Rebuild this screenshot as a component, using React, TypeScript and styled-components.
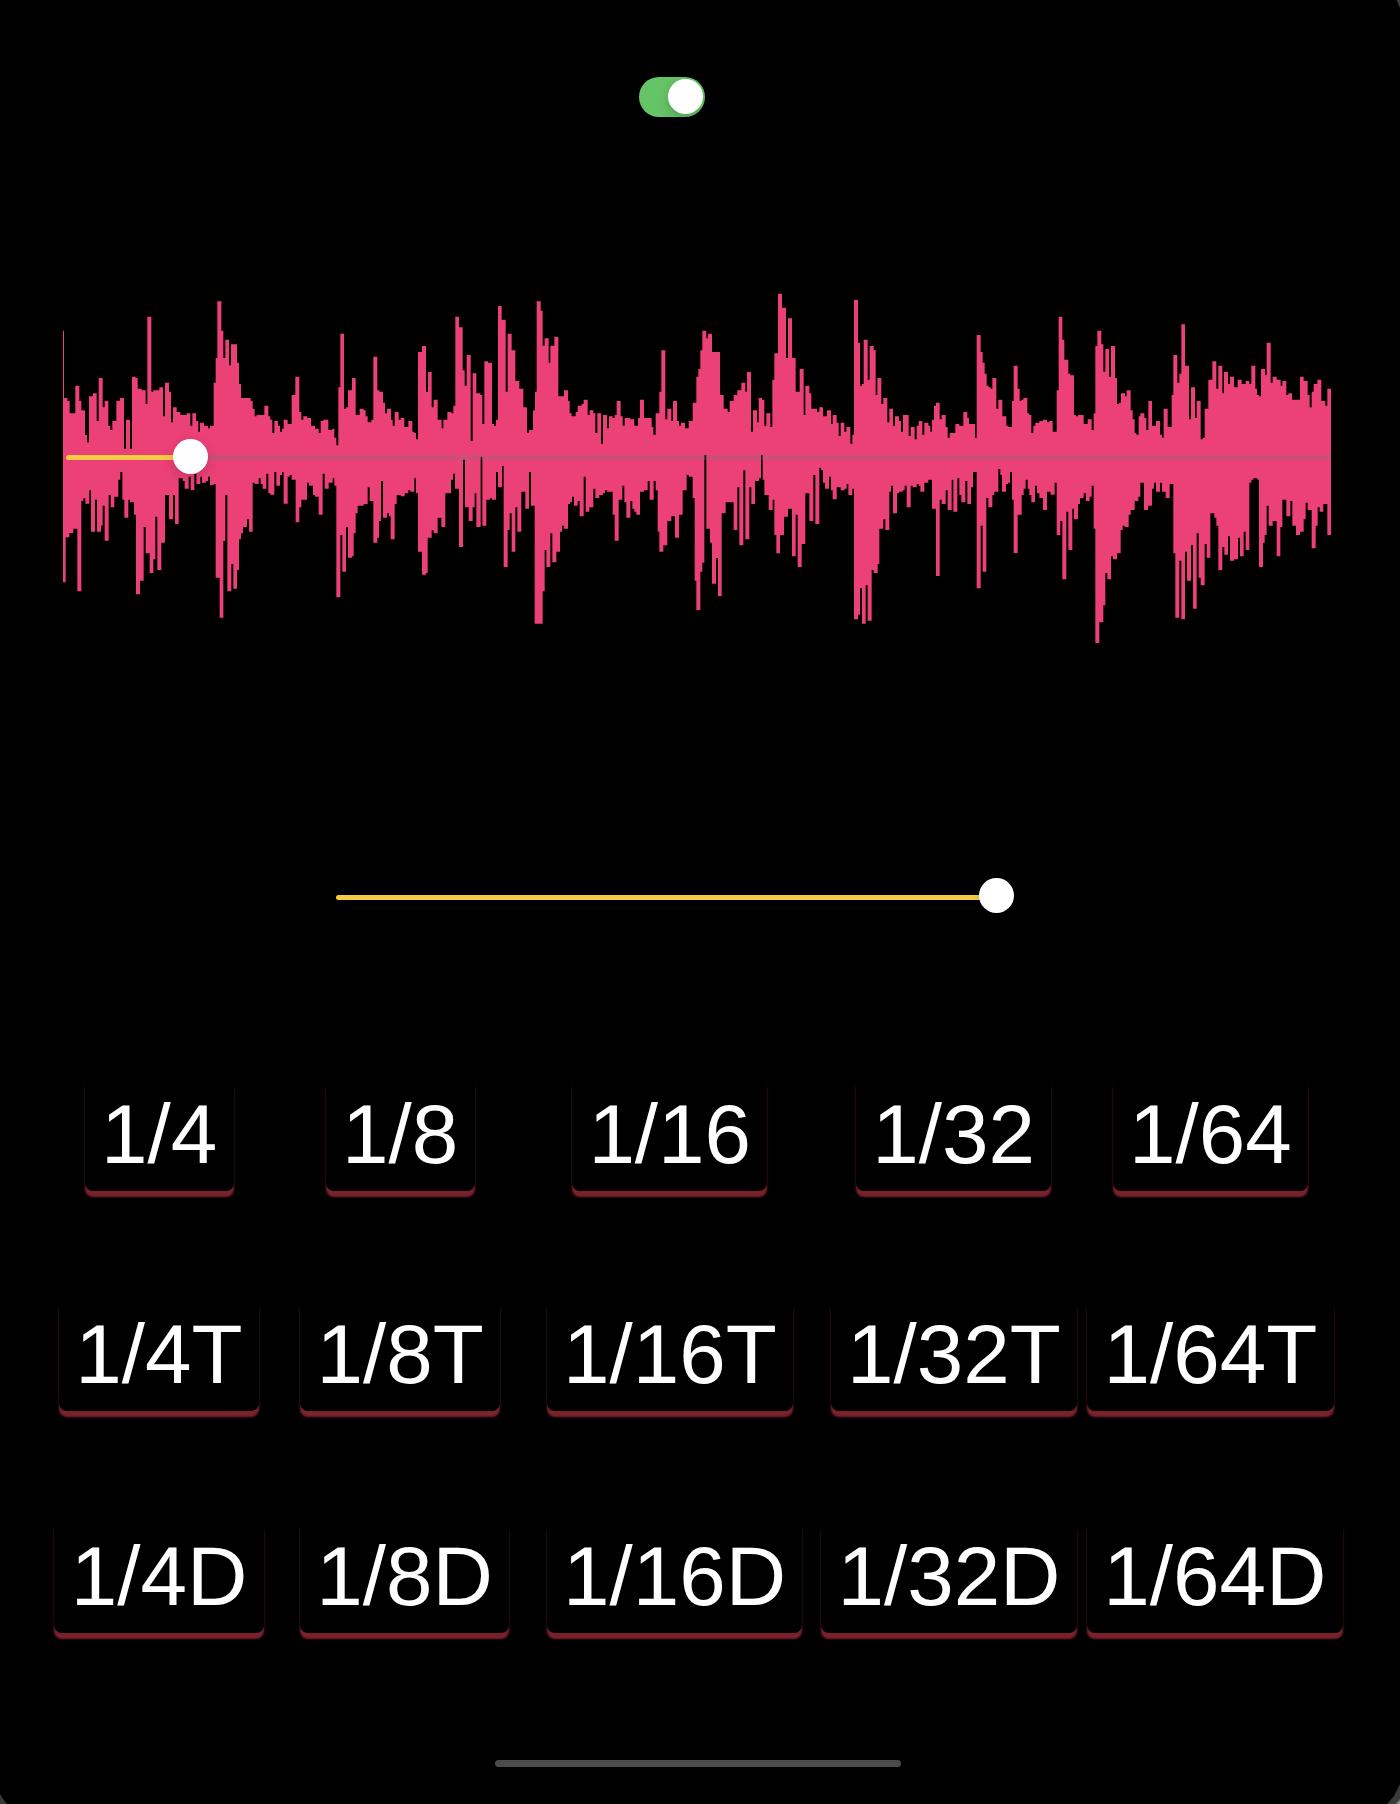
import React from "react";
import styled, { createGlobalStyle } from "styled-components";

const GlobalStyle = createGlobalStyle`
  html, body { margin: 0; background: #000; }
  * { box-sizing: border-box; }
`;

/* Each envelope is a list of "x:y" steps; x restarts at every chunk, 960 units apart. */
const UPPER = [
  "39:152 42:354 52:363 59:400 76:317 88:363 94:391 105:465 111:487 117:349 129:340 140:423 146:294 158:382 164:363 175:437 181:450 187:423 199:363 210:354 222:506 228:419 240:506 246:290 257:294 263:326 275:331 287:372 292:110 304:335 310:331 328:322 339:409 345:308 357:335 363:427 369:382 380:396 391:405 410:400 421:437 427:400 438:423 445:455 450:428 462:437 474:445 480:437 491:308 497:234 502:64 514:152 520:234 526:179 537:256 543:193 561:248 567:312 573:354 602:363 608:386 614:409 620:405 643:377 655:409 661:419 667:459 673:423 684:437 690:455 696:446 701:419 713:432 725:345 736:290 748:396 754:419 760:409 772:414 783:437 795:446 806:459 812:423 820:419 835:450 847:446 853:473 859:496 865:322 871:161 882:386 888:382 894:331 906:294 917:405 929:386 941:391 947:409 953:427",
  "4:419 10:230 22:331 28:335 39:368 45:400 51:386 63:419 68:437 74:396 86:419 92:414 103:441 115:423 127:455 133:459 138:478 144:216 156:198 168:335 174:276 185:382 191:359 203:419 215:445 220:419 232:396 244:400 250:377 256:110 267:142 278:271 284:317 290:225 302:483 308:280 319:340 331:345 337:432 343:244 354:248 366:432 372:437 378:419 384:78 395:119 407:335 413:161 425:211 436:303 448:326 460:382 471:459 477:450 489:391 495:335 500:64 512:92 518:197 524:175 536:248 541:197 553:170 565:349 582:331 594:363 599:400 605:409 617:396 623:377 635:372 641:359 653:405 659:391 670:400 676:459 682:400 693:491 699:405 711:445 717:409 728:414 734:405 740:363 752:409 758:437 764:414 781:418 793:437 804:414 810:359 822:414 845:441 850:464 857:400 868:335 874:211 886:418 892:386 904:423 909:363 921:423 927:437 933:428 945:445 956:423",
  "8:368 19:290 25:267 31:211 37:152 49:175 54:161 66:216 90:345 101:386 113:396 119:363 131:345 142:331 154:308 166:335 171:276 183:455 189:391 201:427 206:354 216:359 223:437 229:400 241:441 247:299 253:220 264:41 276:83 288:234 294:115 306:234 317:335 329:267 341:405 346:317 358:340 364:386 381:396 388:382 399:409 411:391 423:432 428:405 440:428 446:468 452:428 463:455 469:441 481:491 487:464 492:60 504:188 510:317 516:312 521:179 533:299 539:198 551:211 557:345 562:294 574:372 580:354 592:427 598:386 609:437 615:409 627:423 633:455 639:405 656:468 662:441 674:478 680:437 686:423 697:464 703:428 715:437 721:455 726:419 732:377 738:368 749:418 755:405 767:441 773:473 779:459 796:432 808:437 820:396 832:414 837:432 855:473 860:165 872:216 878:248 884:281 890:317 896:322 902:326 907:294 919:386 925:359 937:409 949:437 955:441",
  "6:363 11:257 23:326 29:363 34:359 40:354 52:400 58:405 64:459 70:437 76:428 88:423 99:419 111:427 117:423 128:455 140:331 146:110 157:179 163:239 175:281 181:286 192:405 198:409 204:405 221:432 233:418 245:450 251:400 256:198 262:152 274:193 280:275 286:207 297:290 303:198 315:294 321:372 327:368 333:340 345:349 350:331 362:391 368:418 374:459 379:464 386:409 391:400 403:414 409:450 415:363 426:437 438:423 450:464 456:473 461:386 473:441 485:345 490:225 502:308 508:281 514:133 525:257 537:418 543:322 555:414 560:363 572:478 578:473 584:386 595:299 607:244 619:326 625:257 637:340 642:276 654:312 660:290 672:322 683:299 695:312 707:303 718:312 724:257 736:326 741:345 747:349 753:267 765:285 770:188 782:308 788:290 800:299 812:317 817:303 829:345 835:340 846:359 870:290 881:303 893:345 899:382 905:335 911:312 922:299 934:363 946:377 952:326",
];

const LOWER = [
  "39:907 47:772 58:759 70:746 82:934 94:663 100:655 106:671 118:631 123:755 135:659 141:755 153:737 158:677 164:782 176:645 182:682 193:650 205:599 211:576 217:659 223:713 235:659 240:667 252:704 258:943 270:902 281:741 287:820 299:879 310:838 316:710 322:870 334:788 345:645 357:718 369:645 375:732 386:595 398:603 404:626 416:590 422:630 433:582 439:612 451:590 456:608 468:603 474:590 480:616 491:612 497:893 509:1013 520:783 526:645 532:934 544:852 550:926 561:870 567:778 573:760 579:741 591:718 597:755 608:608 614:612 626:595 632:612 638:626 649:581 655:640 661:644 673:576 679:617 690:585 696:576 701:671 713:590 719:585 725:599 737:727 748:682 754:659 771:608 777:617 789:645 795:650 806:704 818:581 824:626 836:608 848:595 853:617 859:952 871:765 877:875 888:741 894:833 906:829 911:760 917:700 923:677 941:672 953:622 959:663",
  "10:788 22:773 27:723 33:603 39:713 51:700 57:709 62:778 74:672 80:645 92:649 104:640 115:631 121:635 133:595 138:640 144:815 156:884 168:879 173:773 185:751 191:760 203:713 214:741 226:640 243:599 249:581 255:626 267:801 279:539 285:682 296:723 308:682 314:640 319:741 332:530 337:737 349:659 360:655 366:659 378:576 384:622 396:558 401:861 413:750 419:700 425:815 436:682 442:755 454:635 466:686 477:576 483:677 494:1031 518:934 524:810 529:861 541:760 547:847 559:815 570:755 576:737 582:746 594:672 600:667 606:650 612:677 623:663 629:709 641:590 647:695 658:682 670:626 676:654 688:645 699:640 705:631 711:635 728:704 734:782 746:659 757:617 763:667 769:713 781:663 787:686 793:695 799:704 810:635 822:631 833:603 839:659 851:603 857:631 863:755 868:815 880:796 892:723 904:709 915:773 927:704 938:631 950:585 956:590",
  "8:654 14:902 19:990 31:875 37:848 43:525 49:746 60:788 66:911 78:834 84:948 95:700 107:667 131:750 142:622 148:796 160:571 166:778 178:622 184:672 195:603 207:595 213:525 218:599 223:645 236:690 248:659 253:765 259:820 270:765 282:710 294:686 306:829 317:704 323:861 335:792 346:640 358:723 370:585 376:732 388:563 393:571 399:608 405:626 417:590 423:631 428:658 440:622 452:631 464:626 470:612 475:645 487:626 492:1018 504:1004 510:925 516:1031 527:916 533:1022 545:870 551:879 563:852 568:746 580:718 586:750 598:635 603:617 609:700 621:640 627:635 638:631 644:617 650:682 662:617 668:622 680:612 686:617 691:635 703:608 715:599 726:686 738:888 749:659 755:672 767:631 773:690 785:599 790:695 802:595 808:645 814:667 826:603 832:672 843:622 849:576 860:925 872:737 878:875 889:654 895:682 907:645 913:635 925:567 931:585 936:635 948:612 954:608",
  "0:576 6:659 11:819 23:704 35:645 41:626 47:599 53:626 58:645 64:667 75:617 81:640 88:654 99:690 111:635 122:644 134:608 140:765 151:723 157:898 169:695 175:810 187:686 192:718 204:672 210:654 221:640 228:663 239:650 245:617 251:746 256:1089 268:1027 280:976 286:879 292:898 303:829 309:838 321:820 332:750 338:737 344:741 356:704 362:690 374:663 385:650 391:608 402:690 414:677 426:626 432:608 438:635 450:608 456:635 467:654 479:612 490:820 496:1013 508:842 514:1018 525:815 531:902 543:796 549:986 560:760 566:893 572:916 584:792 590:833 601:700 613:713 619:737 625:870 637:801 643:824 654:769 660:842 672:838 684:773 690:829 701:755 707:810 718:608 724:599 730:595 742:599 747:861 759:788 764:765 770:677 776:737 788:723 800:829 811:741 817:659 829:709 841:663 847:737 858:765 870:755 881:718 887:668 893:690 905:805 917:737 923:682 929:695 940:672 952:765",
];

const CHUNK = 960;
const START = 39;
const END = 3 * CHUNK + 963;

function parse(chunks: string[]) {
  return chunks.flatMap((chunk, i) =>
    chunk.split(" ").map((s) => {
      const [x, y] = s.split(":").map(Number);
      return [x + i * CHUNK, y];
    })
  );
}

/* One closed outline: along the upper steps, then back along the lower ones. */
function wavePath() {
  const upper = parse(UPPER);
  const lower = parse(LOWER).reverse();
  return (
    `M${START} ${upper[0][1]}` +
    upper.map(([x, y]) => `H${x}V${y}`).join("") +
    `H${END}` +
    lower.map(([x, y]) => `V${y}H${x}`).join("") +
    "Z"
  );
}

const Screen = styled.main`
  width: 1400px;
  height: 1804px;
  background: linear-gradient(315deg, #8a8a8a 2px, #3a3a3a 4px);
  overflow: hidden;
`;

const Display = styled.div`
  display: flex;
  flex-direction: column;
  height: 100%;
  padding-top: 77px;
  background: #000;
  clip-path: polygon(
    0 0, 1396.5px 0, 1400px 8px, 1400px 1784px, 1394px 1796px,
    1387px 1804px, 7px 1804px, 3px 1799px, 0 1794px
  );
  font-family: "Liberation Sans", Helvetica, Arial, sans-serif;
`;

const Toggle = styled.button`
  display: flex;
  justify-content: flex-end;
  align-items: center;
  width: 66px;
  height: 40px;
  margin: 0 0 0 639.4px;
  padding: 0 2.4px 0.6px 0;
  border: 0;
  border-radius: 20px;
  background: #65c466;
  overflow: hidden;
`;

const Knob = styled.span`
  flex: none;
  width: 35px;
  height: 35px;
  border-radius: 50%;
  background: #fff;
  box-shadow: 0 4px 12px rgba(0, 0, 0, 0.18);
`;

const WavePanel = styled.section`
  display: grid;
  width: 1284px;
  height: 370px;
  margin: 163px 0 0 50px;
`;

const Wave = styled.svg`
  grid-area: 1 / 1;
  width: 1284px;
  height: 370px;
  fill: #ec4176;
`;

const Slider = styled.div<{ $width: number }>`
  display: flex;
  align-items: center;
  width: ${(p) => p.$width}px;
  height: 35px;
`;

const ScrubSlider = styled(Slider)`
  grid-area: 1 / 1;
  z-index: 1;
  margin: 158.5px 0 0 15.6px;
`;

const LevelSlider = styled(Slider)`
  margin: 228.4px 0 0 336.3px;
`;

const Fill = styled.span<{ $width: number }>`
  flex: none;
  width: ${(p) => p.$width}px;
  height: 5px;
  margin: 2.6px -4px 0 0;
  border-radius: 3px 0 0 3px;
  background: #f7cb46;
`;

const Rest = styled.span`
  flex: 1 1 0;
  height: 5px;
  margin: 2.6px 0 0 -4px;
  border-radius: 0 3px 3px 0;
  background: rgba(120, 120, 128, 0.28);
`;

const SliderKnob = styled(Knob)`
  z-index: 1;
`;

const PadGrid = styled.section`
  display: flex;
  flex-direction: column;
  margin-top: 162.6px;
`;

const PadRow = styled.div<{ $top: number }>`
  display: flex;
  margin-top: ${(p) => p.$top}px;
`;

const Pad = styled.button<{ $gap: number; $width: number }>`
  display: flex;
  justify-content: center;
  align-items: flex-start;
  flex: none;
  width: ${(p) => p.$width}px;
  height: 115px;
  margin: 0 0 0 ${(p) => p.$gap}px;
  padding: 10px 0 0;
  border: 0;
  border-radius: 8px;
  background: #000;
  box-shadow: 0 6px 2px #7b212c;
  color: #fff;
  font: 83.6px/96px "Liberation Sans", Helvetica, Arial, sans-serif;
  white-space: nowrap;
`;

const HomeBar = styled.div`
  width: 406px;
  height: 7px;
  margin: auto 0 37px 494.5px;
  border-radius: 4px;
  background: #4b4b4b;
`;

type PadSpec = [label: string, gap: number, width: number];

const ROWS: { top: number; pads: PadSpec[] }[] = [
  {
    top: 0,
    pads: [["1/4", 84.6, 149], ["1/8", 92, 149], ["1/16", 97.4, 195.5], ["1/32", 88.3, 195.5], ["1/64", 61.3, 195.5]],
  },
  {
    top: 105,
    pads: [["1/4T", 59, 200], ["1/8T", 41.2, 200], ["1/16T", 46.4, 246.6], ["1/32T", 37.4, 246.6], ["1/64T", 10, 246.6]],
  },
  {
    top: 107,
    pads: [["1/4D", 54.4, 209.3], ["1/8D", 36.3, 209.3], ["1/16D", 37.4, 255.8], ["1/32D", 18.6, 255.8], ["1/64D", 10, 255.8]],
  },
];

export default function App() {
  return (
    <Screen>
      <GlobalStyle />
      <Display>
        <Toggle role="switch" aria-checked="true">
          <Knob />
        </Toggle>
        <WavePanel>
          <Wave viewBox="0 0 3852 1110">
            <path d={wavePath()} />
          </Wave>
          <ScrubSlider $width={1265.5}>
            <Fill $width={111} />
            <SliderKnob />
            <Rest />
          </ScrubSlider>
        </WavePanel>
        <LevelSlider $width={677.2}>
          <Fill $width={646.4} />
          <SliderKnob />
        </LevelSlider>
        <PadGrid>
          {ROWS.map((row) => (
            <PadRow key={row.pads[0][0]} $top={row.top}>
              {row.pads.map(([label, gap, width]) => (
                <Pad key={label} $gap={gap} $width={width}>
                  {label}
                </Pad>
              ))}
            </PadRow>
          ))}
        </PadGrid>
        <HomeBar />
      </Display>
    </Screen>
  );
}
